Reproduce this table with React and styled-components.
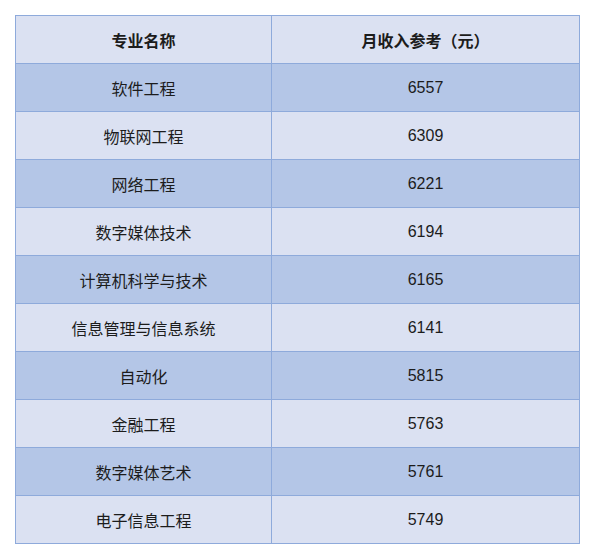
import React from "react";
import styled, { createGlobalStyle } from "styled-components";

const GlobalStyle = createGlobalStyle`
  html, body {
    margin: 0;
    padding: 0;
    background: #ffffff;
  }
  body {
    font-family: "Liberation Sans", "Noto Sans CJK SC", sans-serif;
  }
`;

const rows = [
  ["软件工程", "6557"],
  ["物联网工程", "6309"],
  ["网络工程", "6221"],
  ["数字媒体技术", "6194"],
  ["计算机科学与技术", "6165"],
  ["信息管理与信息系统", "6141"],
  ["自动化", "5815"],
  ["金融工程", "5763"],
  ["数字媒体艺术", "5761"],
  ["电子信息工程", "5749"],
];

const Page = styled.div`
  width: 595px;
  height: 559px;
  padding: 15px 0 0 15px;
  box-sizing: border-box;
`;

const Table = styled.table`
  border-collapse: collapse;
  width: 564px;
  table-layout: fixed;
`;

const Cell = styled.td`
  height: 47px;
  padding: 0;
  border: 1px solid #8eaadb;
  text-align: center;
  vertical-align: middle;
  font-size: 16px;
  color: #1c1c1c;
  font-weight: ${(p) => (p.$head ? 700 : 400)};
  background: ${(p) => (p.$dark ? "#b4c6e7" : "#dbe1f2")};
`;

export default function App() {
  return (
    <Page>
      <GlobalStyle />
      <Table>
        <colgroup>
          <col style={{ width: 256 }} />
          <col style={{ width: 308 }} />
        </colgroup>
        <tbody>
          <tr>
            <Cell $head>专业名称</Cell>
            <Cell $head>月收入参考（元）</Cell>
          </tr>
          {rows.map(([name, pay], i) => (
            <tr key={name}>
              <Cell $dark={i % 2 === 0}>{name}</Cell>
              <Cell $dark={i % 2 === 0}>{pay}</Cell>
            </tr>
          ))}
        </tbody>
      </Table>
    </Page>
  );
}
